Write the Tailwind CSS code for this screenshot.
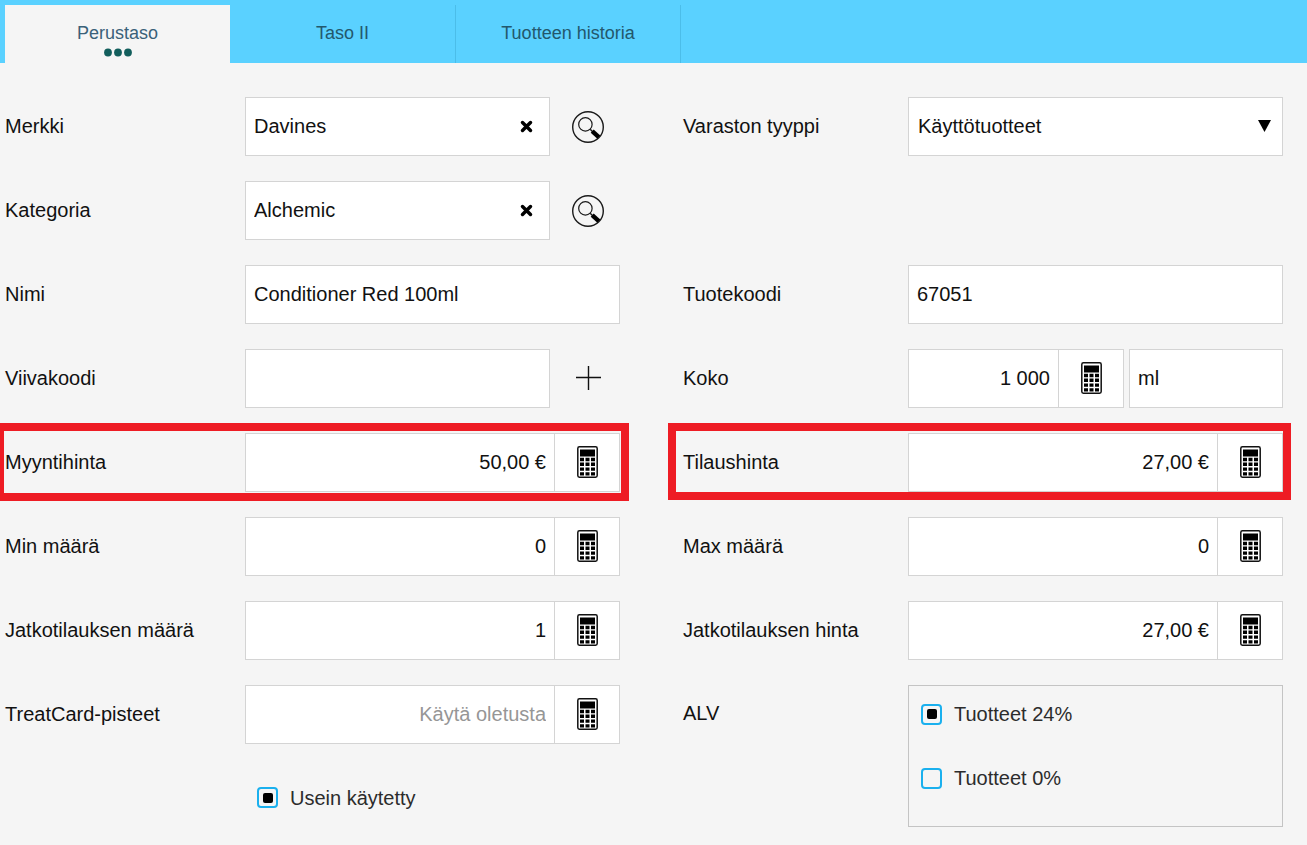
<!DOCTYPE html>
<html lang="fi">
<head>
<meta charset="utf-8">
<meta name="viewport" content="width=device-width, initial-scale=1">
<title>Tuote</title>
<script src="https://cdn.jsdelivr.net/npm/@tailwindcss/browser@4"></script>
</head>
<body class="min-h-screen bg-[#f5f5f5] font-['Liberation_Sans',Arial,sans-serif] text-[20px] leading-6 text-[#111]">
<svg class="hidden" aria-hidden="true">
  <symbol id="calc" viewBox="0 0 21 32">
    <rect x="0.8" y="0.8" width="19.4" height="30.4" rx="1.6" fill="#fff" stroke="#111" stroke-width="1.5"/>
    <path fill="#000" d="M3 3.6h15v6.8H3zM3 11.8h4v3.4H3zM8.5 11.8h4v3.4h-4zM14 11.8h4v3.4h-4zM3 16.6h4V20H3zM8.5 16.6h4V20h-4zM14 16.6h4V20h-4zM3 21.4h4v3.4H3zM8.5 21.4h4v3.4h-4zM14 21.4h4v3.4h-4zM3 26.2h4v3.2H3zM8.5 26.2h4v3.2h-4zM14 26.2h4v3.2h-4z"/>
  </symbol>
  <symbol id="search" viewBox="0 0 34 34">
    <g fill="none" stroke="#1a1a1a">
      <circle cx="17" cy="17" r="15.3" stroke-width="1.4"/>
      <circle cx="14.4" cy="14.4" r="6.7" stroke-width="1.2"/>
      <path d="M19.2 19.2l3 3" stroke-width="1.4"/>
      <path d="M21.2 21.2l6.600 6" stroke="#000" stroke-width="4.4"/>
    </g>
  </symbol>
  <symbol id="clear" viewBox="0 0 12 12">
    <path d="M2.3 2.3l7.4 7.4M9.7 2.3l-7.4 7.4" stroke="#000" stroke-width="3.2" stroke-linecap="round"/>
  </symbol>
</svg>

<nav class="flex h-[63px] bg-[#5ad1ff] pt-[5px] pl-[5px] text-[18px] text-[#23586c]">
  <button type="button" class="relative w-[225px] bg-[#f5f5f5] pb-[2px] text-[#3a6179]">Perustaso
    <svg class="absolute bottom-[6px] left-1/2 -translate-x-1/2" width="28" height="9" viewBox="0 0 28 9" fill="#125e5c" aria-hidden="true"><circle cx="4" cy="4.5" r="3.9"/><circle cx="14" cy="4.5" r="3.9"/><circle cx="24" cy="4.5" r="3.9"/></svg>
  </button>
  <button type="button" class="w-[226px] border-r border-[#4bbde9] pb-[2px]">Taso II</button>
  <button type="button" class="w-[225px] border-r border-[#4bbde9] pb-[2px]">Tuotteen historia</button>
</nav>

<form class="grid auto-rows-[59px] grid-cols-[240px_minmax(0,1fr)_63px_225px_minmax(0,1fr)] gap-y-[25px] pt-[34px] pr-6 pl-[5px] [&_label]:pb-[2px]">
  <div class="col-span-2 grid grid-cols-subgrid items-center">
    <label for="merkki">Merkki</label>
    <div class="flex h-full items-center gap-[6px]">
      <div class="flex h-full min-w-0 flex-1 items-center border border-[#d4d4d4] bg-white">
        <input id="merkki" type="text" value="Davines" class="h-full min-w-0 flex-1 pl-2 outline-none">
        <button type="button" aria-label="Tyhjennä merkki" class="px-4"><svg class="size-[13px]"><use href="#clear"/></svg></button>
      </div>
      <button type="button" aria-label="Hae merkki" class="flex w-16 justify-center"><svg class="size-[34px]"><use href="#search"/></svg></button>
    </div>
  </div>
  <div class="col-span-2 col-start-4 grid grid-cols-subgrid items-center">
    <label for="varasto">Varaston tyyppi</label>
    <div class="relative h-full">
      <select id="varasto" class="h-full w-full appearance-none border border-[#d4d4d4] bg-white pr-10 pb-[2px] pl-[9px] outline-none"><option>Käyttötuotteet</option></select>
      <svg class="pointer-events-none absolute top-[23px] right-3" width="13" height="12" viewBox="0 0 13 12" aria-hidden="true"><path d="M0 0h13L6.500 12z"/></svg>
    </div>
  </div>

  <div class="col-span-2 col-start-1 grid grid-cols-subgrid items-center">
    <label for="kategoria">Kategoria</label>
    <div class="flex h-full items-center gap-[6px]">
      <div class="flex h-full min-w-0 flex-1 items-center border border-[#d4d4d4] bg-white">
        <input id="kategoria" type="text" value="Alchemic" class="h-full min-w-0 flex-1 pl-2 outline-none">
        <button type="button" aria-label="Tyhjennä kategoria" class="px-4"><svg class="size-[13px]"><use href="#clear"/></svg></button>
      </div>
      <button type="button" aria-label="Hae kategoria" class="flex w-16 justify-center"><svg class="size-[34px]"><use href="#search"/></svg></button>
    </div>
  </div>

  <div class="col-span-2 col-start-1 grid grid-cols-subgrid items-center">
    <label for="nimi">Nimi</label>
    <input id="nimi" type="text" value="Conditioner Red 100ml" class="h-full min-w-0 border border-[#d4d4d4] bg-white px-2 outline-none">
  </div>
  <div class="col-span-2 col-start-4 grid grid-cols-subgrid items-center">
    <label for="koodi">Tuotekoodi</label>
    <input id="koodi" type="text" value="67051" class="h-full min-w-0 border border-[#d4d4d4] bg-white px-2 outline-none">
  </div>

  <div class="col-span-2 col-start-1 grid grid-cols-subgrid items-center">
    <label for="viiva">Viivakoodi</label>
    <div class="flex h-full items-center gap-[6px]">
      <input id="viiva" type="text" class="h-full min-w-0 flex-1 border border-[#d4d4d4] bg-white px-2 outline-none">
      <button type="button" aria-label="Lisää viivakoodi" class="flex w-16 justify-center pb-[2px]"><svg width="26" height="26" viewBox="0 0 26 26" stroke="#111" stroke-width="1.400"><path d="M13.500 1v24M1 12.500h25"/></svg></button>
    </div>
  </div>
  <div class="col-span-2 col-start-4 grid grid-cols-subgrid items-center">
    <label for="koko">Koko</label>
    <div class="flex h-full gap-[5px]">
      <div class="flex min-w-0 flex-1 border border-[#d4d4d4] bg-white">
        <input id="koko" type="text" value="1 000" class="min-w-0 flex-1 px-2 pb-[2px] text-right outline-none">
        <button type="button" aria-label="Laskin" class="flex w-[65px] items-center justify-center border-l border-[#d4d4d4] pb-[2px]"><svg class="h-8 w-[21px]"><use href="#calc"/></svg></button>
      </div>
      <input type="text" aria-label="Yksikkö" value="ml" class="w-[154px] min-w-0 border border-[#d4d4d4] bg-white px-2 pb-[2px] outline-none">
    </div>
  </div>

  <div class="relative col-span-2 col-start-1 grid grid-cols-subgrid items-center">
    <label for="myynti">Myyntihinta</label>
    <div class="flex h-full border border-[#d4d4d4] bg-white">
      <input id="myynti" type="text" value="50,00 €" class="min-w-0 flex-1 px-2 pb-[2px] text-right outline-none">
      <button type="button" aria-label="Laskin" class="flex w-[65px] items-center justify-center border-l border-[#d4d4d4] pb-[2px]"><svg class="h-8 w-[21px]"><use href="#calc"/></svg></button>
    </div>
    <div class="pointer-events-none absolute -top-[10px] -right-[9px] -bottom-[9px] -left-[9px] border-8 border-[#ee1c24]"></div>
  </div>
  <div class="relative col-span-2 col-start-4 grid grid-cols-subgrid items-center">
    <label for="tilaus">Tilaushinta</label>
    <div class="flex h-full border border-[#d4d4d4] bg-white">
      <input id="tilaus" type="text" value="27,00 €" class="min-w-0 flex-1 px-2 pb-[2px] text-right outline-none">
      <button type="button" aria-label="Laskin" class="flex w-[65px] items-center justify-center border-l border-[#d4d4d4] pb-[2px]"><svg class="h-8 w-[21px]"><use href="#calc"/></svg></button>
    </div>
    <div class="pointer-events-none absolute -top-[10px] -right-2 -bottom-2 -left-[15px] border-8 border-[#ee1c24]"></div>
  </div>

  <div class="col-span-2 col-start-1 grid grid-cols-subgrid items-center">
    <label for="min">Min määrä</label>
    <div class="flex h-full border border-[#d4d4d4] bg-white">
      <input id="min" type="text" value="0" class="min-w-0 flex-1 px-2 pb-[2px] text-right outline-none">
      <button type="button" aria-label="Laskin" class="flex w-[65px] items-center justify-center border-l border-[#d4d4d4] pb-[2px]"><svg class="h-8 w-[21px]"><use href="#calc"/></svg></button>
    </div>
  </div>
  <div class="col-span-2 col-start-4 grid grid-cols-subgrid items-center">
    <label for="max">Max määrä</label>
    <div class="flex h-full border border-[#d4d4d4] bg-white">
      <input id="max" type="text" value="0" class="min-w-0 flex-1 px-2 pb-[2px] text-right outline-none">
      <button type="button" aria-label="Laskin" class="flex w-[65px] items-center justify-center border-l border-[#d4d4d4] pb-[2px]"><svg class="h-8 w-[21px]"><use href="#calc"/></svg></button>
    </div>
  </div>

  <div class="col-span-2 col-start-1 grid grid-cols-subgrid items-center">
    <label for="jmaara">Jatkotilauksen määrä</label>
    <div class="flex h-full border border-[#d4d4d4] bg-white">
      <input id="jmaara" type="text" value="1" class="min-w-0 flex-1 px-2 pb-[2px] text-right outline-none">
      <button type="button" aria-label="Laskin" class="flex w-[65px] items-center justify-center border-l border-[#d4d4d4] pb-[2px]"><svg class="h-8 w-[21px]"><use href="#calc"/></svg></button>
    </div>
  </div>
  <div class="col-span-2 col-start-4 grid grid-cols-subgrid items-center">
    <label for="jhinta">Jatkotilauksen hinta</label>
    <div class="flex h-full border border-[#d4d4d4] bg-white">
      <input id="jhinta" type="text" value="27,00 €" class="min-w-0 flex-1 px-2 pb-[2px] text-right outline-none">
      <button type="button" aria-label="Laskin" class="flex w-[65px] items-center justify-center border-l border-[#d4d4d4] pb-[2px]"><svg class="h-8 w-[21px]"><use href="#calc"/></svg></button>
    </div>
  </div>

  <div class="col-span-2 col-start-1 grid grid-cols-subgrid items-center">
    <label for="treat">TreatCard-pisteet</label>
    <div class="flex h-full border border-[#d4d4d4] bg-white">
      <input id="treat" type="text" placeholder="Käytä oletusta" class="min-w-0 flex-1 px-2 pb-[2px] text-right outline-none placeholder:text-[#969696]">
      <button type="button" aria-label="Laskin" class="flex w-[65px] items-center justify-center border-l border-[#d4d4d4] pb-[2px]"><svg class="h-8 w-[21px]"><use href="#calc"/></svg></button>
    </div>
  </div>
  <div role="group" aria-labelledby="alv" class="col-span-2 col-start-4 row-span-2 grid grid-cols-subgrid items-start">
    <span id="alv" class="pt-4">ALV</span>
    <div class="flex h-[142px] flex-col gap-[38px] border border-[#c4c4c4] pt-4 pl-3 text-[#2c2c2c]">
      <label class="flex items-center gap-3">
        <input type="checkbox" checked class="grid size-[21px] appearance-none place-items-center rounded-[4px] border-2 border-[#1ab0ee] before:size-[10px] before:rounded-[2px] checked:before:bg-black">
        Tuotteet 24%
      </label>
      <label class="flex items-center gap-3">
        <input type="checkbox" class="grid size-[21px] appearance-none place-items-center rounded-[4px] border-2 border-[#1ab0ee] before:size-[10px] before:rounded-[2px] checked:before:bg-black">
        Tuotteet 0%
      </label>
    </div>
  </div>

  <label class="col-start-2 flex items-center gap-3 pl-3 text-[#2c2c2c]">
    <input type="checkbox" checked class="grid size-[21px] appearance-none place-items-center rounded-[4px] border-2 border-[#1ab0ee] before:size-[10px] before:rounded-[2px] checked:before:bg-black">
    Usein käytetty
  </label>
</form>
</body>
</html>
